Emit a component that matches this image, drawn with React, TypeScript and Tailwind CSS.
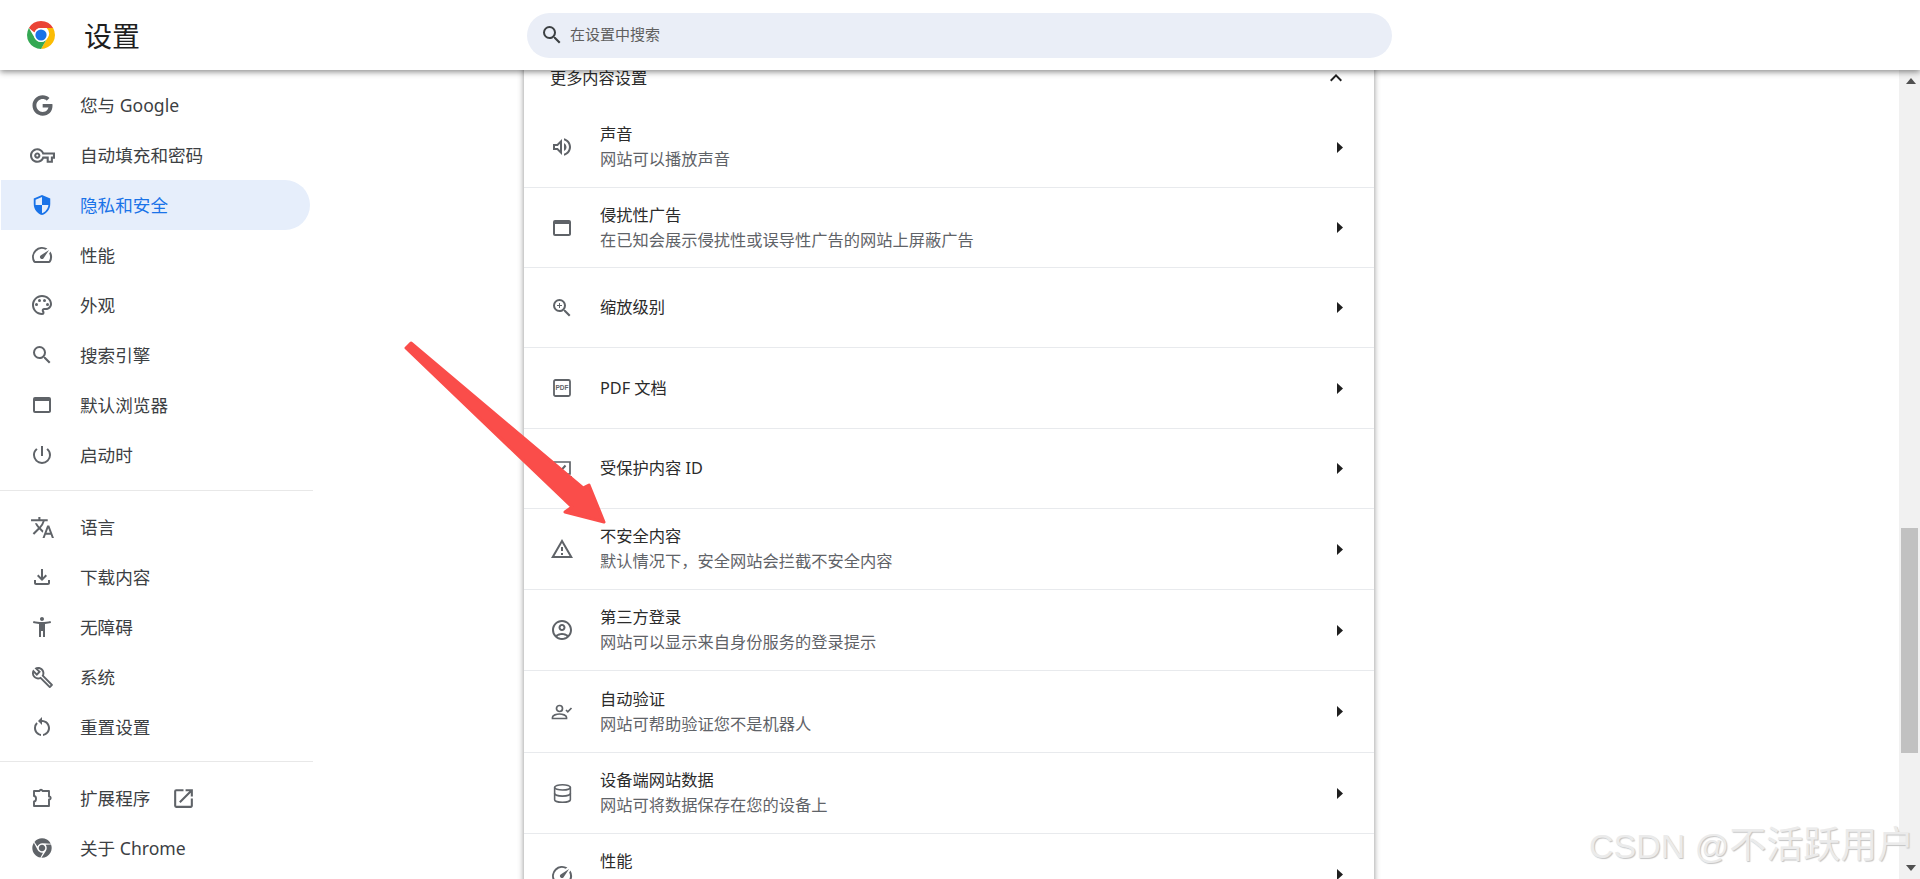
import type { ReactNode } from "react";
import { FaChrome, FaGoogle } from "react-icons/fa";
import {
  MdAccessibilityNew,
  MdKeyboardArrowUp,
  MdOpenInNew,
  MdOutlineAccountCircle,
  MdOutlineBuild,
  MdOutlineFileDownload,
  MdOutlinePalette,
  MdOutlineVpnKey,
  MdOutlineVolumeUp,
  MdOutlineWarningAmber,
  MdOutlineWebAsset,
  MdOutlineZoomIn,
  MdPowerSettingsNew,
  MdRestartAlt,
  MdSearch,
  MdSecurity,
  MdSpeed,
  MdTranslate,
} from "react-icons/md";
import { Database } from "lucide-react";

const fontStack = "font-['Noto_Sans','Noto_Sans_CJK_SC',sans-serif]";

function ChromeLogo() {
  return (
    <svg viewBox="4 4 40 40" className="w-[28px] h-[28px]">
      <path d="M24 4a20 20 0 0 1 17.3 10H24a10 10 0 0 0-9.3 6.3L6.7 14A20 20 0 0 1 24 4z" fill="#ea4335" />
      <path d="M41.3 14A20 20 0 0 1 24 44l8.7-15a10 10 0 0 0-.7-15z" fill="#fbbc04" />
      <path d="M6.7 14l9 15.5A10 10 0 0 0 32.7 29L24 44A20 20 0 0 1 6.7 14z" fill="#34a853" />
      <circle cx="24" cy="24" r="10" fill="#ffffff" />
      <circle cx="24" cy="24" r="8" fill="#1a73e8" />
    </svg>
  );
}

function PdfIcon() {
  return (
    <svg viewBox="0 0 24 24" width="24" height="24" fill="none">
      <rect x="4" y="4" width="16" height="16" rx="1.5" stroke="#5f6368" strokeWidth="1.8" />
      <text x="12" y="14.4" textAnchor="middle" fontSize="6.5" fontWeight="700" fontFamily="Liberation Sans, sans-serif" fill="#5f6368">
        PDF
      </text>
    </svg>
  );
}

function ProtectedIdIcon() {
  return (
    <svg viewBox="0 0 24 24" width="24" height="24" fill="none" stroke="#5f6368" strokeWidth="1.7">
      <path d="M4 17V5h16v12H4z" />
      <path d="M2 20h20" />
      <path d="M8.5 11l2.5 2.5 4.5-5" strokeWidth="2" />
    </svg>
  );
}

function VerifyIcon() {
  return (
    <svg viewBox="0 0 24 24" width="24" height="24" fill="none" stroke="#5f6368" strokeWidth="1.7">
      <circle cx="9.5" cy="8.5" r="3" />
      <path d="M2.5 18.5v-1.2c0-2 4-3.3 7-3.3s7 1.300 7 3.300v1.200z" />
      <path d="M16 10l1.800 1.800L21.500 8" />
    </svg>
  );
}

function ExtensionIcon() {
  return (
    <svg viewBox="0 0 24 24" width="24" height="24" fill="none" stroke="#5f6368" strokeWidth="1.9" strokeLinejoin="round">
      <path d="M4 5h5.500c.5-1.600 2.500-1.600 3 0H19v5.500c2.200-.3 2.200 3.300 0 3V20H4v-4.500c2.700 0 2.700-5.500 0-5.500z" />
    </svg>
  );
}

const g = "#5f6368";

type NavItem = { icon: ReactNode; label: string; active?: boolean; external?: boolean };

const navGroups: { cls: string; items: NavItem[] }[] = [
  {
    cls: "",
    items: [
      { icon: <FaGoogle size={21} color={g} />, label: "您与 Google" },
      { icon: <MdOutlineVpnKey size={25} color={g} />, label: "自动填充和密码" },
      { icon: <MdSecurity size={22} color="#1a73e8" />, label: "隐私和安全", active: true },
      { icon: <MdSpeed size={24} color={g} />, label: "性能" },
      { icon: <MdOutlinePalette size={24} color={g} />, label: "外观" },
      { icon: <MdSearch size={24} color={g} />, label: "搜索引擎" },
      { icon: <MdOutlineWebAsset size={24} color={g} />, label: "默认浏览器" },
      { icon: <MdPowerSettingsNew size={24} color={g} />, label: "启动时" },
    ],
  },
  {
    cls: "mt-[10px] pt-[11px] border-t border-[#e8e8e8]",
    items: [
      { icon: <MdTranslate size={25} color={g} />, label: "语言" },
      { icon: <MdOutlineFileDownload size={24} color={g} />, label: "下载内容" },
      { icon: <MdAccessibilityNew size={24} color={g} />, label: "无障碍" },
      { icon: <MdOutlineBuild size={23} color={g} />, label: "系统" },
      { icon: <MdRestartAlt size={24} color={g} />, label: "重置设置" },
    ],
  },
  {
    cls: "mt-[9px] pt-[11px] border-t border-[#e8e8e8]",
    items: [
      { icon: <ExtensionIcon />, label: "扩展程序", external: true },
      { icon: <FaChrome size={20} color={g} />, label: "关于 Chrome" },
    ],
  },
];

const rows = [
  { h: "h-[81px]", icon: <MdOutlineVolumeUp size={24} color={g} />, title: "声音", sub: "网站可以播放声音" },
  { h: "h-[80px]", icon: <MdOutlineWebAsset size={24} color={g} />, title: "侵扰性广告", sub: "在已知会展示侵扰性或误导性广告的网站上屏蔽广告" },
  { h: "h-[80px]", icon: <MdOutlineZoomIn size={24} color={g} />, title: "缩放级别" },
  { h: "h-[81px]", icon: <PdfIcon />, title: "PDF 文档" },
  { h: "h-[80px]", icon: <ProtectedIdIcon />, title: "受保护内容 ID" },
  { h: "h-[81px]", icon: <MdOutlineWarningAmber size={24} color={g} />, title: "不安全内容", sub: "默认情况下，安全网站会拦截不安全内容" },
  { h: "h-[81px]", icon: <MdOutlineAccountCircle size={24} color={g} />, title: "第三方登录", sub: "网站可以显示来自身份服务的登录提示" },
  { h: "h-[82px]", icon: <VerifyIcon />, title: "自动验证", sub: "网站可帮助验证您不是机器人" },
  { h: "h-[81px]", icon: <Database size={21} color={g} strokeWidth={1.8} />, title: "设备端网站数据", sub: "网站可将数据保存在您的设备上" },
  { h: "h-[81px]", icon: <MdSpeed size={24} color={g} />, title: "性能", sub: "\u00a0" },
];

function NavRow({ item }: { item: NavItem }) {
  return (
    <div
      className={`ml-[1px] w-[309px] h-[50px] flex items-center rounded-r-[25px] ${
        item.active ? "bg-[#e6eefb] text-[#1a73e8]" : "text-[#3c4043]"
      }`}
    >
      <span className="w-[82px] flex justify-center shrink-0">{item.icon}</span>
      <span className="-ml-[3px] text-[17.6px] leading-[24px]">{item.label}</span>
      {item.external && (
        <span className="ml-[21px] flex">
          <MdOpenInNew size={25} color={g} />
        </span>
      )}
    </div>
  );
}

export default function App() {
  return (
    <div className={`relative h-[879px] overflow-hidden bg-white flex flex-col ${fontStack}`}>
      <header className="relative z-10 h-[70px] shrink-0 bg-white flex items-center shadow-[0_2px_6px_rgba(0,0,0,0.45)]">
        <div className="w-[527px] shrink-0 flex items-center pl-[27px]">
          <ChromeLogo />
          <span className="ml-[29px] mt-[2px] text-[28px] leading-[36px] text-[#1f1f1f]">设置</span>
        </div>
        <div className="w-[865px] h-[45px] rounded-full bg-[#eaeef7] flex items-center pl-[13px] gap-[6px]">
          <MdSearch size={24} color="#3c4043" />
          <span className="-mt-[1px] text-[15px] text-[#5f5f5f]">在设置中搜索</span>
        </div>
      </header>

      <div className="flex-1 min-h-0 flex">
        <nav className="w-[313px] shrink-0 pt-[10px]">
          {navGroups.map((group, i) => (
            <div key={i} className={group.cls}>
              {group.items.map((item) => (
                <NavRow key={item.label} item={item} />
              ))}
            </div>
          ))}
        </nav>

        <main className="flex-1 min-w-0 overflow-hidden pl-[211px]">
          <section className="w-[850px] -mt-[10px] bg-white shadow-[0_0_6px_rgba(0,0,0,0.45)]">
            <div className="h-[47px] pb-[11px] pl-[26px] pr-[26px] flex items-center justify-between">
              <span className="text-[16.2px] leading-[16px] text-[#2b2b2b]">更多内容设置</span>
              <MdKeyboardArrowUp size={24} color="#1f1f1f" />
            </div>
            {rows.map((row) => (
              <div key={row.title} className={`${row.h} flex items-center border-b border-[#e8eaed] pl-[26px] pr-[31px]`}>
                <span className="w-[24px] shrink-0 flex justify-center">{row.icon}</span>
                <div className="ml-[26px] flex-1 min-w-0 text-[16.25px] leading-[25px]">
                  <div className="text-[#2b2b2b]">{row.title}</div>
                  {row.sub && <div className="text-[#5f6368]">{row.sub}</div>}
                </div>
                <svg viewBox="0 0 6 11" className="w-[6px] h-[11px]">
                  <path d="M0 0L6 5.500L0 11z" fill="#1f1f1f" />
                </svg>
              </div>
            ))}
          </section>
        </main>

        <div className="w-[21px] shrink-0 bg-[#f1f1f1] flex flex-col items-center justify-between pt-[8px] pb-[8px] pl-[2px]">
          <svg viewBox="0 0 10 6" className="w-[10px] h-[6px]">
            <path d="M5 0L10 6H0z" fill="#505050" />
          </svg>
          <div className="absolute top-[528px] right-[2px] w-[17px] h-[225px] bg-[#c1c1c1]" />
          <svg viewBox="0 0 10 6" className="w-[10px] h-[6px]">
            <path d="M0 0H10L5 6z" fill="#505050" />
          </svg>
        </div>
      </div>

      {/* annotation arrow drawn over the page */}
      <svg className="absolute inset-0 z-20 pointer-events-none" width="1920" height="879">
        <path
          d="M406 348L411 343L583 488L589 485L604 522L565 512L572 507z"
          fill="#fa4d4a"
          stroke="#fa4d4a"
          strokeWidth="3"
          strokeLinejoin="round"
        />
      </svg>

      <span className="absolute z-20 left-[1589px] top-[824px] whitespace-nowrap text-[34px] leading-[44px] text-[#ebebeb] [text-shadow:1px_1px_1px_#c4c4c4] font-['Liberation_Sans','Noto_Sans_CJK_SC',sans-serif]">
        CSDN @<span className="text-[37px]">不活跃用户</span>
      </span>
    </div>
  );
}
